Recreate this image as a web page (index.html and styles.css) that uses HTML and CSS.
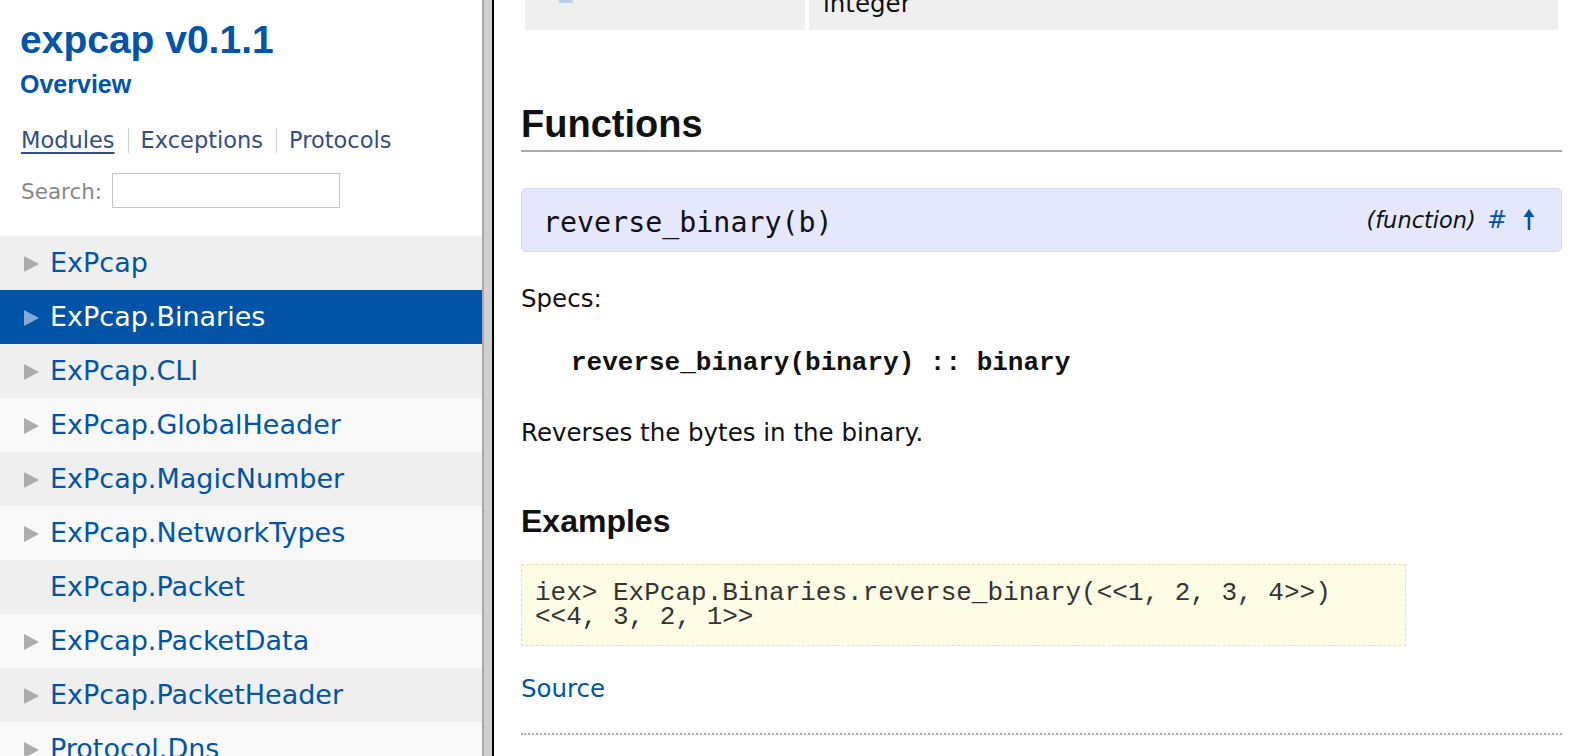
FILE: index.html
```html
<!DOCTYPE html>
<html lang="en">
<head>
<meta charset="utf-8">
<title>ExPcap.Binaries – expcap v0.1.1</title>
<link rel="stylesheet" href="styles.css">
</head>
<body>
<div class="page">
  <nav class="sidebar">
    <h1 class="project"><a href="#">expcap v0.1.1</a></h1>
    <a class="overview" href="#">Overview</a>
    <div class="sections">
      <a class="section active" href="#">Modules</a>
      <span class="sep"></span>
      <a class="section" href="#">Exceptions</a>
      <span class="sep"></span>
      <a class="section" href="#">Protocols</a>
    </div>
    <div class="search">
      <label class="search-label">Search:</label>
      <input class="search-input" type="text">
    </div>
    <ul class="modules">
      <li class="mod odd"><span class="tri"></span><a href="#">ExPcap</a></li>
      <li class="mod even selected"><span class="tri"></span><a href="#">ExPcap.Binaries</a></li>
      <li class="mod odd"><span class="tri"></span><a href="#">ExPcap.CLI</a></li>
      <li class="mod even"><span class="tri"></span><a href="#">ExPcap.GlobalHeader</a></li>
      <li class="mod odd"><span class="tri"></span><a href="#">ExPcap.MagicNumber</a></li>
      <li class="mod even"><span class="tri"></span><a href="#">ExPcap.NetworkTypes</a></li>
      <li class="mod odd"><span class="tri-space"></span><a href="#">ExPcap.Packet</a></li>
      <li class="mod even"><span class="tri"></span><a href="#">ExPcap.PacketData</a></li>
      <li class="mod odd"><span class="tri"></span><a href="#">ExPcap.PacketHeader</a></li>
      <li class="mod even"><span class="tri"></span><a href="#">Protocol.Dns</a></li>
    </ul>
  </nav>
  <div class="divider"><span class="d1"></span><span class="d2"></span><span class="d3"></span></div>
  <main class="content">
    <table class="summary">
      <tr>
        <td class="cell-name"><span class="cell-mark"></span></td>
        <td class="cell-doc">integer</td>
      </tr>
    </table>

    <h2 class="section-title">Functions</h2>

    <div class="detail-header">
      <span class="signature">reverse_binary(b)</span>
      <span class="detail-meta">
        <span class="detail-type">(function)</span>
        <a class="detail-link" href="#">#</a>
        <a class="detail-up" href="#" aria-label="Top"><svg width="12" height="21" viewBox="0 0 12 21"><path d="M6 0 L11.5 8 L7.3 8 L7.3 21 L4.7 21 L4.7 8 L0.5 8 Z" fill="#0055a8"/></svg></a>
      </span>
    </div>

    <p class="specs-label">Specs:</p>
    <p class="spec">reverse_binary(binary) :: binary</p>
    <p class="doc">Reverses the bytes in the binary.</p>

    <h3 class="sub-title">Examples</h3>
    <pre class="example">iex&gt; ExPcap.Binaries.reverse_binary(&lt;&lt;1, 2, 3, 4&gt;&gt;)
&lt;&lt;4, 3, 2, 1&gt;&gt;</pre>

    <a class="source" href="#">Source</a>
    <div class="rule"></div>
  </main>
</div>
</body>
</html>
```

FILE: styles.css
```css
html, body {
  margin: 0;
  padding: 0;
  background: #ffffff;
}

body {
  width: 1582px;
  height: 756px;
  overflow: hidden;
  font-family: "DejaVu Sans", "Lucida Grande", sans-serif;
  color: #111;
}

a {
  text-decoration: none;
  color: #0055a8;
}

.page {
  display: flex;
  height: 756px;
  overflow: hidden;
}

/* Sidebar */
.sidebar {
  width: 482px;
  flex: 0 0 482px;
  height: 756px;
  overflow: hidden;
  display: flex;
  flex-direction: column;
  padding-top: 18px;
  box-sizing: border-box;
}

.project {
  margin: 0 0 0 20px;
  font-family: "Liberation Sans", Arial, sans-serif;
  font-weight: bold;
  font-size: 39px;
  line-height: 44px;
}

.project a {
  color: #0055a8;
}

.overview {
  margin: 8px 0 0 20px;
  font-family: "Liberation Sans", Arial, sans-serif;
  font-weight: bold;
  font-size: 25px;
  line-height: 28px;
  color: #0055a8;
}

.sections {
  display: flex;
  align-items: center;
  margin: 27px 0 0 21px;
  height: 30px;
}

.section {
  font-size: 22.5px;
  line-height: 30px;
  color: #2e4f88;
}

.section.active {
  text-decoration: underline;
  text-underline-offset: 4px;
}

.sep {
  width: 1px;
  height: 25px;
  background: #cfcfcf;
  margin: 0 12px 0 13px;
}

.search {
  display: flex;
  align-items: center;
  margin: 18px 0 0 21px;
  height: 35px;
}

.search-label {
  font-size: 21.5px;
  line-height: 30px;
  color: #888;
  padding-top: 3px;
  width: 91px;
}

.search-input {
  width: 228px;
  height: 35px;
  box-sizing: border-box;
  border: 1px solid #c4c4c4;
  background: #fff;
  margin: 0;
  padding: 0 4px;
}

.modules {
  list-style: none;
  margin: 28px 0 0 0;
  padding: 0;
}

.mod {
  display: flex;
  align-items: center;
  height: 54px;
  padding-left: 24px;
  font-size: 27px;
}

.mod a {
  color: #0055a8;
  line-height: 54px;
}

.mod.odd {
  background: #efefef;
}

.mod.even {
  background: #f9f9f9;
}

.mod.selected {
  background: #0054a8;
}

.mod.selected a {
  color: #ffffff;
}

.tri {
  width: 0;
  height: 0;
  border-top: 8px solid transparent;
  border-bottom: 8px solid transparent;
  border-left: 15px solid #acacac;
  margin-right: 11px;
  margin-top: 1px;
}

.selected .tri {
  border-left-color: #86a9d8;
}

.tri-space {
  width: 15px;
  margin-right: 11px;
}

/* Divider */
.divider {
  flex: 0 0 12px;
  display: flex;
  height: 756px;
}

.d1 {
  width: 2px;
  background: #a9a9a9;
}

.d2 {
  width: 8px;
  background: #d0d0d0;
}

.d3 {
  width: 2px;
  background: #000;
}

/* Content */
.content {
  flex: 1;
  padding: 0 20px 0 27px;
  min-width: 0;
  display: flex;
  flex-direction: column;
  align-items: stretch;
}

.summary {
  margin-top: -26px;
  border-spacing: 4px;
  width: 100%;
}

.summary td {
  background: #efefef;
  padding: 8px 14px;
  font-size: 24.5px;
  line-height: 36px;
  vertical-align: top;
  height: 36px;
}

.cell-name {
  width: 252px;
}

.cell-mark {
  display: block;
  width: 14px;
  height: 3px;
  margin: 14px 0 0 20px;
  background: #bcd0ea;
}

.section-title {
  margin: 68px 0 0 0;
  font-family: "Liberation Sans", Arial, sans-serif;
  font-weight: bold;
  font-size: 38px;
  line-height: 44px;
  padding-bottom: 4px;
  border-bottom: 2px solid #a8a8a8;
  color: #111;
}

.detail-header {
  margin-top: 36px;
  display: flex;
  align-items: center;
  justify-content: space-between;
  height: 64px;
  box-sizing: border-box;
  padding: 0 26px 0 21px;
  background: #e5e7fc;
  border: 1px solid #d6d8ea;
  border-radius: 5px;
}

.signature {
  font-family: "DejaVu Sans Mono", monospace;
  font-size: 28.3px;
  color: #111;
  padding-top: 4px;
}

.detail-meta {
  display: flex;
  align-items: center;
}

.detail-type {
  font-style: italic;
  font-size: 22.5px;
  color: #111;
  margin-right: 11px;
}

.detail-link {
  font-size: 24px;
  color: #0055a8;
}

.detail-up {
  display: flex;
  margin-left: 16px;
  margin-top: -2px;
}

.specs-label {
  margin: 31px 0 0 0;
  font-size: 24.5px;
  line-height: 32px;
}

.spec {
  margin: 32px 0 0 50px;
  font-family: "Liberation Mono", "Courier New", monospace;
  font-weight: bold;
  font-size: 26px;
  line-height: 32px;
  color: #111;
}

.doc {
  margin: 38px 0 0 0;
  font-size: 24.5px;
  line-height: 32px;
}

.sub-title {
  margin: 53px 0 0 0;
  font-family: "Liberation Sans", Arial, sans-serif;
  font-weight: bold;
  font-size: 32px;
  line-height: 38px;
  color: #111;
}

.example {
  margin: 24px 0 0 0;
  width: 885px;
  box-sizing: border-box;
  padding: 16px 13px;
  background: #fffce6;
  border: 1px dashed #f7d9a6;
  font-family: "Liberation Mono", "Courier New", monospace;
  font-size: 26px;
  line-height: 24px;
  color: #333;
}

.source {
  margin-top: 27px;
  font-size: 24.5px;
  line-height: 32px;
  align-self: flex-start;
  color: #0055a8;
}

.rule {
  margin-top: 28px;
  border-top: 2px dotted #ababab;
}
```
